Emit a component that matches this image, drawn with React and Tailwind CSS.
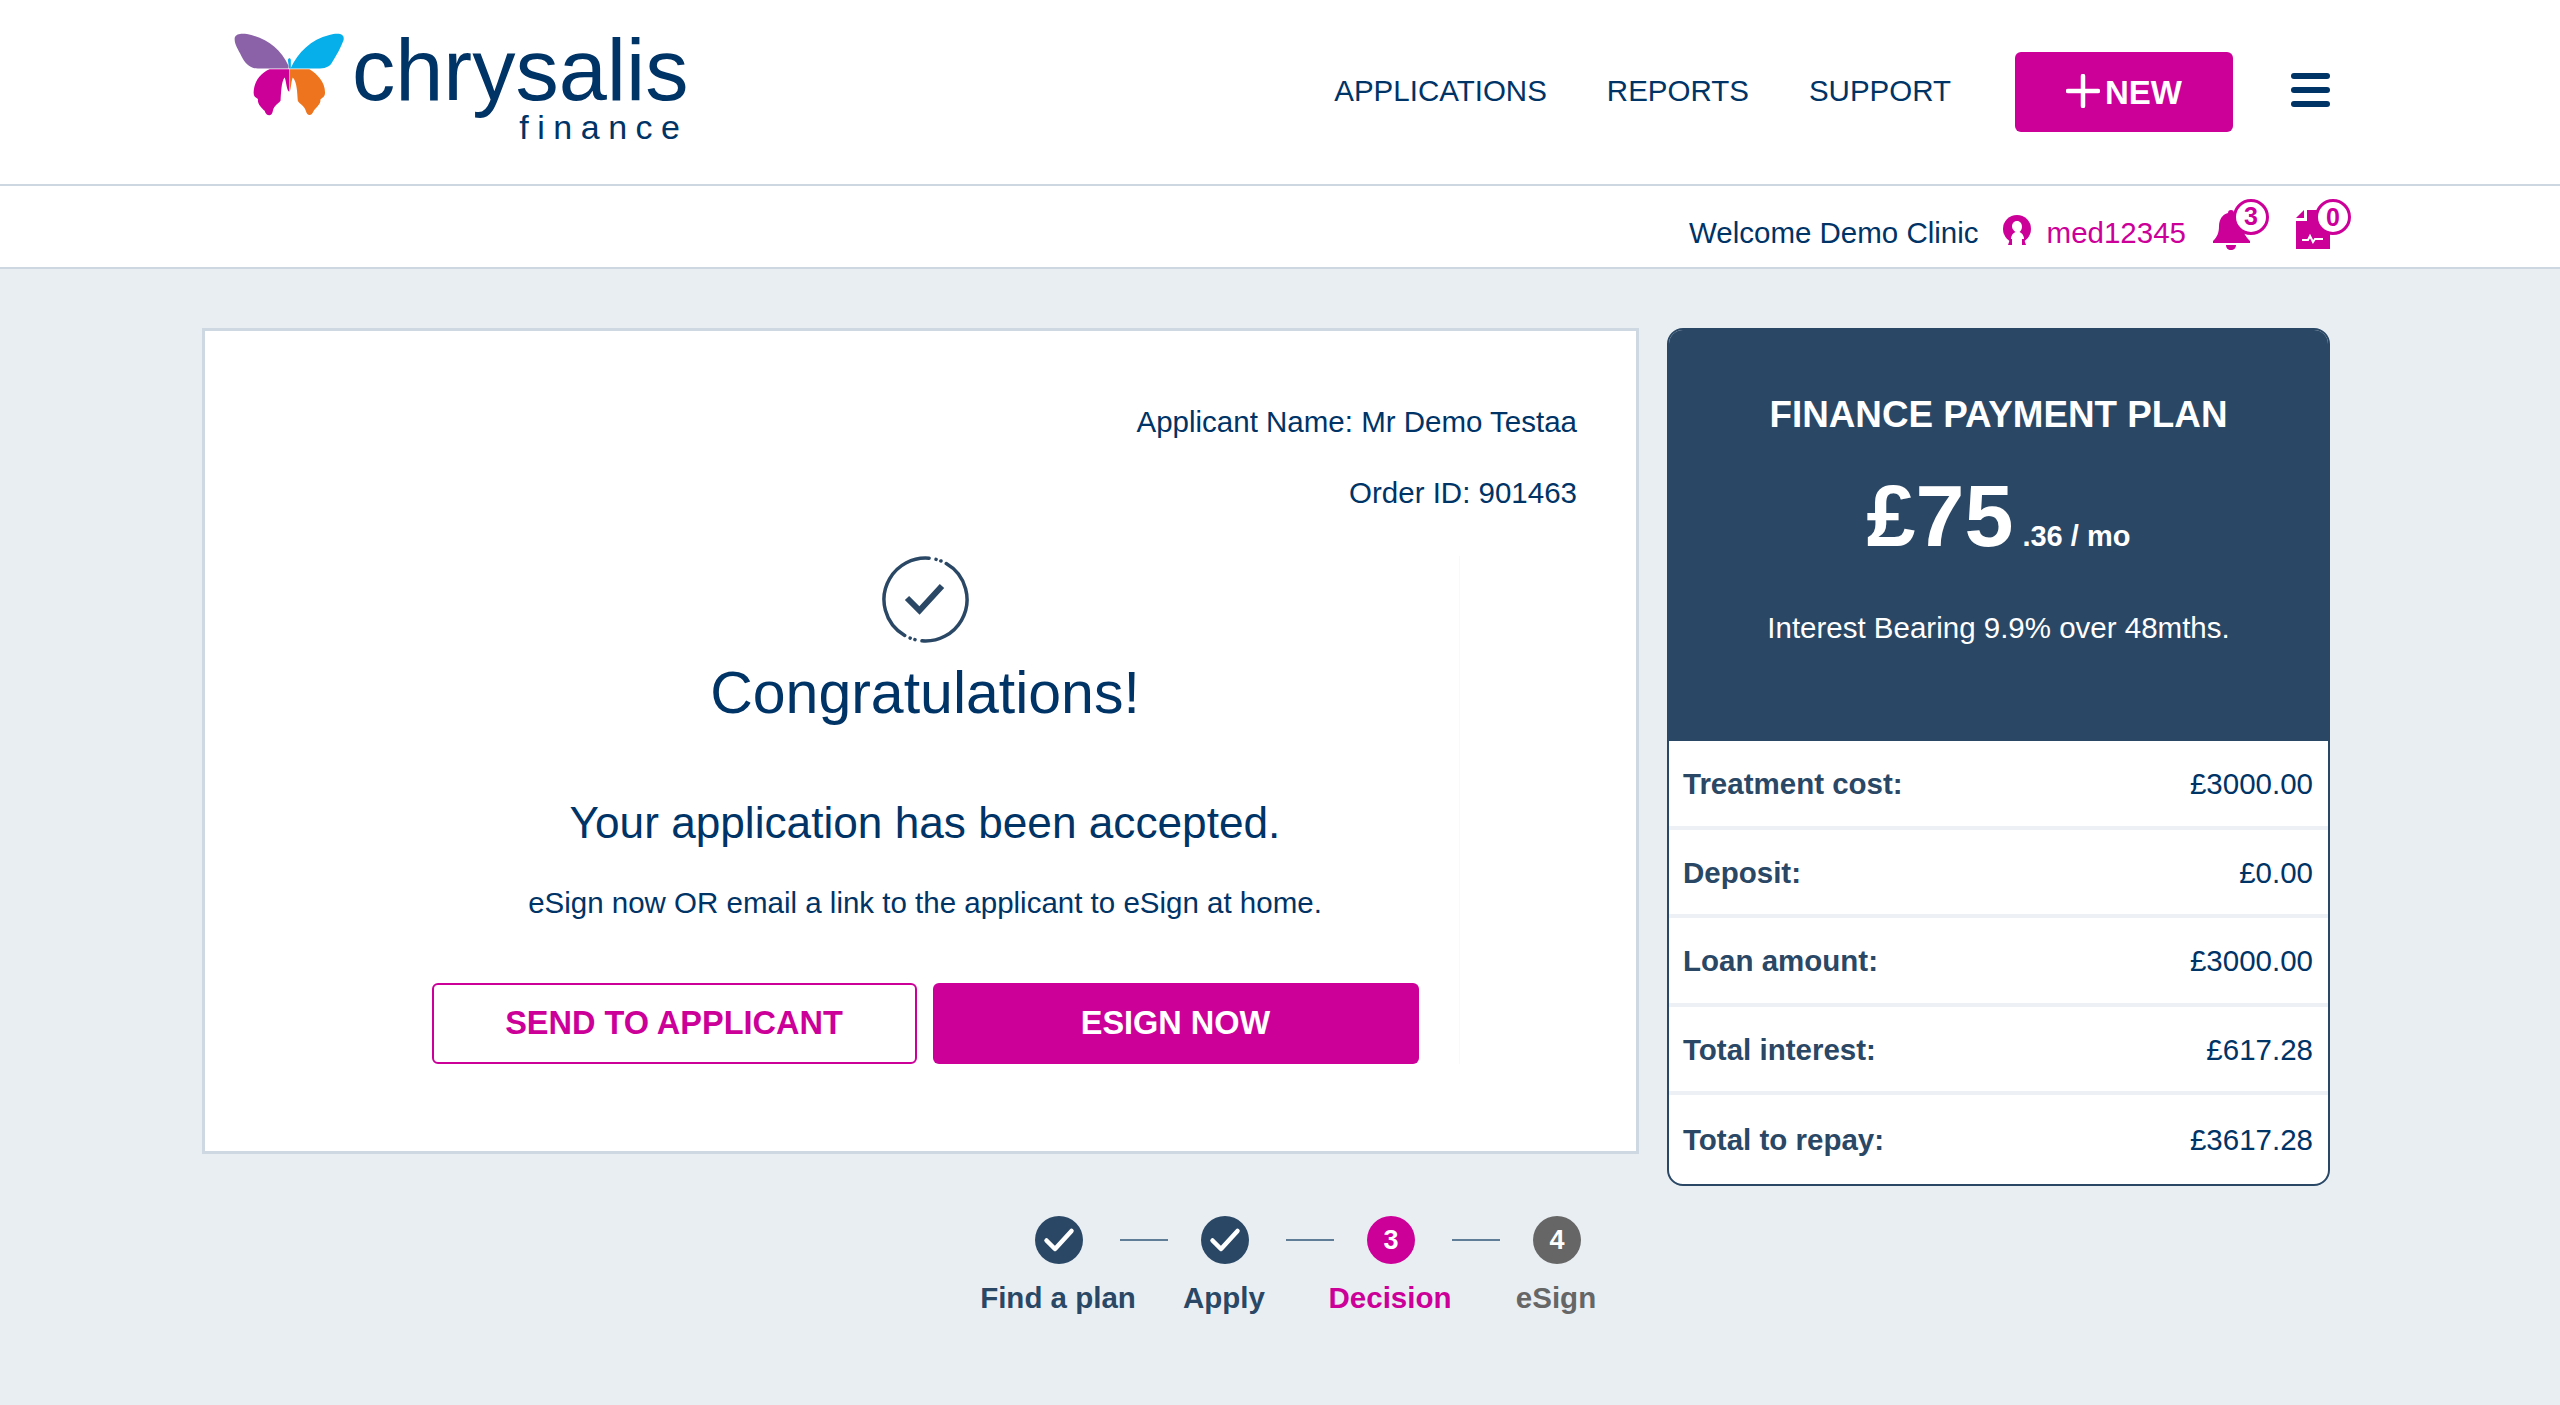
const Check = ({ className }) => (
  <svg viewBox="0 0 48 48" className={className} fill="none">
    <path d="M11.500 24.500L20 33L36.500 15" stroke="#fff" strokeWidth="4.500" strokeLinecap="round" strokeLinejoin="round" />
  </svg>
);

const Butterfly = () => (
  <svg viewBox="95 85 340 265" className="w-[113px] h-[88px] shrink-0">
    <path fill="#8b62a8" d="M100 105C105 90 130 92 150 97C200 110 240 140 262 190V198H170C145 198 130 180 120 160C110 140 98 125 100 105Z" />
    <path fill="#06aeea" d="M268 198C290 150 330 110 385 97C410 90 432 92 428 112C420 135 405 160 393 180C385 195 370 198 350 198Z" />
    <path fill="#06aeea" d="M260 172C262 165 268 165 269 172V198H264Z" />
    <path fill="#cc0099" d="M264 200H205C180 210 158 235 157 270C157 285 165 285 170 290C168 305 180 315 190 325C195 342 212 345 215 325C218 310 230 305 238 295C240 270 240 240 250 225C255 230 255 262 264 268Z" />
    <path fill="#ee741d" d="M265 200H325C350 215 372 240 372 270C372 285 362 285 358 292C360 305 345 315 338 325C332 342 318 342 314 325C310 310 295 305 290 295C288 270 288 240 275 225C270 235 270 260 265 268Z" />
  </svg>
);

const rows = [
  ["Treatment cost:", "£3000.00"],
  ["Deposit:", "£0.00"],
  ["Loan amount:", "£3000.00"],
  ["Total interest:", "£617.28"],
  ["Total to repay:", "£3617.28"],
];

const steps = [
  { label: "Find a plan", text: "text-[#2a4866]", bg: "bg-[#2a4866]", check: true },
  { label: "Apply", text: "text-[#2a4866]", bg: "bg-[#2a4866]", check: true },
  { label: "Decision", text: "text-[#cc0099]", bg: "bg-[#cc0099]", n: "3" },
  { label: "eSign", text: "text-[#666666]", bg: "bg-[#666666]", n: "4" },
];

export default function App() {
  return (
    <div className="min-h-[1405px] bg-[#e9eef3] font-['Liberation_Sans',Arial,sans-serif] text-[#003366]">
      <header className="h-[186px] bg-white border-b-2 border-[#ccd7e1] flex items-start pl-[233px] pr-[230px]">
        <div className="flex items-start pt-[31px]">
          <Butterfly />
          <div className="ml-[6px] flex flex-col items-end">
            <div className="text-[86.500px] leading-[78px]">chrysalis</div>
            <div className="text-[34px] leading-[34px] tracking-[8.500px] mt-[1px]">finance</div>
          </div>
        </div>
        <nav className="ml-auto flex items-center h-[182px] text-[29.500px] gap-[60px]">
          <a>APPLICATIONS</a>
          <a>REPORTS</a>
          <a>SUPPORT</a>
        </nav>
        <button className="ml-[64px] mt-[52px] w-[218px] h-[80px] bg-[#cc0099] rounded-[6px] text-white text-[33px] font-bold flex items-center justify-center gap-[5px] pt-[2px]">
          <svg viewBox="0 0 34 34" className="w-[34px] h-[34px] mt-[-4px]" fill="none">
            <path d="M17 2v30M2 17h30" stroke="#fff" strokeWidth="4.500" strokeLinecap="round" />
          </svg>
          NEW
        </button>
        <div className="ml-[58px] mt-[73px] w-[39px] flex flex-col gap-[8px]">
          <span className="h-[6px] rounded-full bg-[#003366]" />
          <span className="h-[6px] rounded-full bg-[#003366]" />
          <span className="h-[6px] rounded-full bg-[#003366]" />
        </div>
      </header>

      <div className="h-[83px] bg-white border-b-2 border-[#ccd7e1] flex items-center justify-end pr-[230px] text-[29.500px]">
        <span className="mt-[13px]">Welcome Demo Clinic</span>
        <svg viewBox="0 0 30 30" className="ml-[23px] w-[30px] h-[30px] mt-[6px]">
          <circle cx="15" cy="14" r="14" fill="#cc0099" />
          <path fill="#fff" d="M15 6c3.200 0 5 2.500 5 5.500 0 2.500-1 4.500-2.500 5.500 2.500 1 4 3 4.500 6v7H9v-7c.5-3 2-5 4.500-6C12 16 10 14 10 11.500 10 8.500 11.800 6 15 6z" />
          <path fill="#cc0099" d="M6 30h4v-6H8zM24 30h-4v-6h2z" />
        </svg>
        <span className="ml-[15px] text-[#cc0099] mt-[13px]">med12345</span>
        <div className="relative ml-[27px] w-[37px] h-[40px] mt-[6px] mr-[46px]">
          <svg viewBox="0 0 37 40" className="w-[37px] h-[40px]">
            <path fill="#cc0099" d="M18 0c2 0 3 1 3 3 6 1.500 9 7 9 13 0 7 3 11 7 15v2H0v-2c4-4 6-8 6-15 0-6 3-11.500 9-13 0-2 1-3 3-3zM13 35h10c0 3-2 5-5 5s-5-2-5-5z" />
          </svg>
          <span className="absolute left-[20px] top-[-11px] w-[36px] h-[36px] rounded-full border-[3px] border-[#cc0099] bg-white text-[#cc0099] text-[25px] font-bold leading-none flex items-center justify-center">3</span>
        </div>
        <div className="relative w-[34px] h-[39px] mt-[6px]">
          <svg viewBox="0 0 34 39" className="w-[34px] h-[39px]">
            <path fill="#cc0099" d="M11 0h23v39H0V11h11zM8 0v8H0z" />
            <path fill="none" stroke="#fff" strokeWidth="2" d="M6 30h6l2-4 3 6 2-3h8" />
          </svg>
          <span className="absolute left-[19px] top-[-11px] w-[36px] h-[36px] rounded-full border-[3px] border-[#cc0099] bg-white text-[#cc0099] text-[25px] font-bold leading-none flex items-center justify-center">0</span>
        </div>
      </div>

      <main className="flex items-start pl-[202px] pt-[59px] gap-[28px]">
        <div className="w-[1437px]">
          <section className="h-[826px] bg-white border-[3px] border-[#cdd8e2] pt-[71px]">
            <div className="pr-[59px] text-right text-[29.500px] leading-[40px]">
              <p>Applicant Name: Mr Demo Testaa</p>
              <p className="mt-[31px]">Order ID: 901463</p>
            </div>
            <div className="ml-[186px] w-[1069px] flex flex-col items-center mt-[43px] border-r border-[#f9f9f9]">
              <svg viewBox="0 0 87 87" className="w-[87px] h-[87px]" fill="none">
                <circle cx="43.500" cy="43.500" r="41.500" stroke="#2a4866" strokeWidth="3.500" strokeLinecap="round" strokeDasharray="112 7 0.1 5 0.1 6 112 7 0.1 5 0.1 6" transform="rotate(-60 43.500 43.500)" />
                <path d="M25 42l12.500 12.500L60 30" stroke="#2a4866" strokeWidth="6" strokeLinejoin="miter" />
              </svg>
              <h1 className="mt-[15px] text-[59px] leading-[70px]">Congratulations!</h1>
              <h2 className="mt-[70px] text-[44.200px] leading-[50px]">Your application has been accepted.</h2>
              <p className="mt-[35px] text-[29.500px] leading-[40px]">eSign now OR email a link to the applicant to eSign at home.</p>
              <div className="mt-[60px] flex gap-[16px]">
                <button className="w-[485px] h-[81px] rounded-[6px] border-2 border-[#cc0099] bg-white text-[#cc0099] text-[32.500px] font-bold">SEND TO APPLICANT</button>
                <button className="w-[486px] h-[81px] rounded-[6px] bg-[#cc0099] text-white text-[32.500px] font-bold">ESIGN NOW</button>
              </div>
            </div>
          </section>

          <div className="ml-[773px] mt-[62px] w-[664px]">
            <div className="flex items-center pl-[60px]">
              {steps.map((s, i) => (
                <div key={s.label} className="flex items-center">
                  <div className={`w-[48px] h-[48px] rounded-full flex items-center justify-center text-white text-[27px] font-bold ${s.bg}`}>
                    {s.check ? <Check className="w-[48px] h-[48px]" /> : s.n}
                  </div>
                  {i < 3 && <span className="ml-[37px] mr-[33px] w-[48px] h-[2px] bg-[#5f7d96]" />}
                </div>
              ))}
            </div>
            <div className="grid grid-cols-[repeat(4,166px)] mt-[14px]">
              {steps.map((s) => (
                <div key={s.label} className={`text-center text-[29.500px] leading-[40px] font-bold whitespace-nowrap ${s.text}`}>{s.label}</div>
              ))}
            </div>
          </div>
        </div>

        <aside className="w-[663px] rounded-[16px] overflow-hidden border-2 border-[#2a4866] bg-white">
          <div className="h-[411px] bg-[#2a4866] text-white text-center flex flex-col items-center pt-[65px]">
            <div className="text-[36.800px] leading-[40px] font-bold">FINANCE PAYMENT PLAN</div>
            <div className="mt-[31px] flex items-baseline font-bold leading-[100px]">
              <span className="text-[88px]">£75</span>
              <span className="ml-[9px] text-[29px]">.36 / mo</span>
            </div>
            <div className="mt-[22px] text-[29.500px] leading-[40px]">Interest Bearing 9.9% over 48mths.</div>
          </div>
          <div>
            {rows.map(([k, v], i) => (
              <div key={k} className={`h-[88.500px] pl-[14px] pr-[15px] pt-[2px] flex items-center justify-between text-[29.500px] ${i < 4 ? "border-b-4 border-[#edf1f5]" : ""}`}>
                <span className="font-bold text-[#2a4866]">{k}</span>
                <span>{v}</span>
              </div>
            ))}
          </div>
        </aside>
      </main>
    </div>
  );
}
